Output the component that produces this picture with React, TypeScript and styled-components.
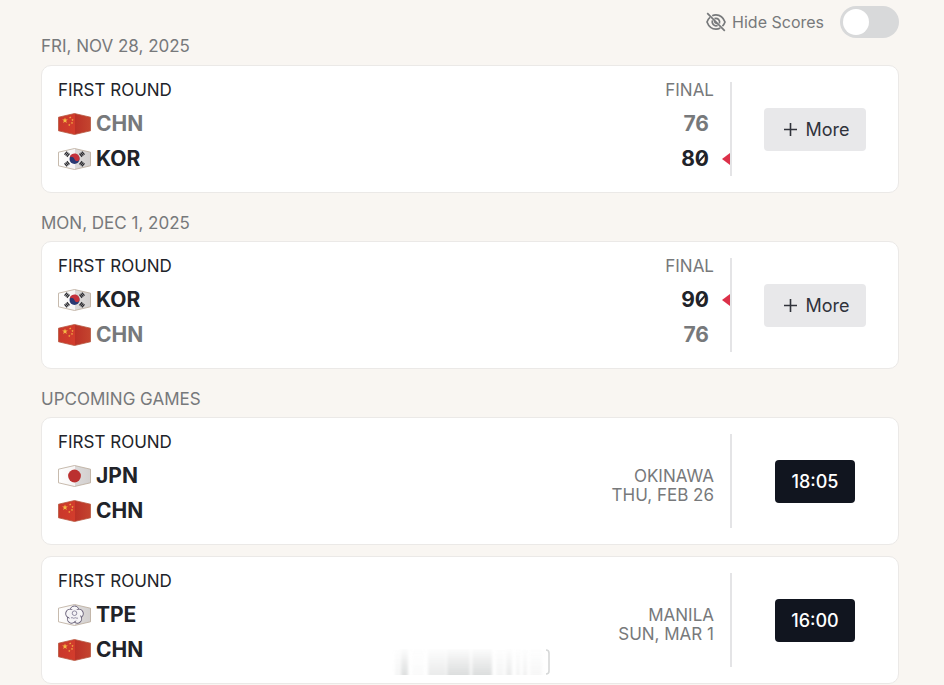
import React, { useState } from "react";
import styled, { createGlobalStyle } from "styled-components";

const GlobalStyle = createGlobalStyle`
  *, *::before, *::after { box-sizing: border-box; }
  body {
    margin: 0;
    background: #f9f6f2;
    color: #212329;
    font-family: Inter, "Liberation Sans", sans-serif;
    font-size: 17px;
    line-height: 16px;
    overflow-x: hidden;
  }
`;

const Page = styled.main`
  padding: 6px 45px 0 41px;
`;

const Toolbar = styled.header`
  display: flex;
  justify-content: flex-end;
`;

const HideScores = styled.label`
  display: flex;
  align-items: center;
  color: #77797b;
  font-size: 16px;
  cursor: pointer;
`;

const HideLabel = styled.span`
  margin: 0 16px 0 6px;
`;

const Toggle = styled.input`
  appearance: none;
  display: flex;
  align-items: center;
  width: 59px;
  height: 32px;
  margin: 0;
  padding: 0 3px;
  border-radius: 16px;
  background: #d8d9da;
  cursor: pointer;

  &::before {
    content: "";
    width: 26px;
    height: 26px;
    border-radius: 50%;
    background: #fff;
  }

  &:checked {
    justify-content: flex-end;
    background: #11151f;
  }
`;

const DateHeading = styled.h2`
  margin: 0 0 11px;
  color: #77797b;
  font-size: 17px;
  font-weight: 400;
  text-transform: uppercase;
`;

const Section = styled.section`
  & + & {
    margin-top: 22px;
  }
  & + & > ${DateHeading} {
    margin-bottom: 10px;
  }
`;

const GameList = styled.div`
  display: flex;
  flex-direction: column;
  gap: 11px;
`;

const Card = styled.article`
  display: flex;
  padding: 16px 0;
  border: 1px solid #ebe9e7;
  border-radius: 10px;
  background: #fff;
`;

const Details = styled.div`
  display: flex;
  flex: 1;
  min-width: 0;
  padding-left: 16px;
  border-right: 2px solid #e4e4e6;
`;

const Matchup = styled.div`
  flex: 1;
`;

const RoundName = styled.h3`
  margin: 0 0 8px;
  color: #212329;
  font-size: 17px;
  font-weight: 400;
`;

const Team = styled.div<{ $muted: boolean }>`
  display: flex;
  align-items: center;
  gap: 5px;
  height: 35px;
  color: ${(p) => (p.$muted ? "#77797b" : "#212329")};
  font-size: 21px;
  font-weight: 700;
`;

const Results = styled.div`
  display: flex;
  flex-direction: column;
`;

const Status = styled.div`
  margin-bottom: 8px;
  padding-right: 16px;
  color: #77797b;
  text-align: right;
`;

const Score = styled.div<{ $muted: boolean }>`
  display: flex;
  align-items: center;
  justify-content: flex-end;
  height: 35px;
  color: ${(p) => (p.$muted ? "#77797b" : "#212329")};
  font-size: 21px;
  font-weight: 700;
`;

const Digit = styled.span<{ $slashed: boolean }>`
  position: relative;

  &::after {
    content: "";
    display: ${(p) => (p.$slashed ? "block" : "none")};
    position: absolute;
    top: 50%;
    left: 50%;
    width: 11px;
    height: 2px;
    background: currentColor;
    transform: translate(-50%, -50%) rotate(-48deg);
  }
`;

const WinnerMark = styled.span<{ $visible: boolean }>`
  margin-left: 13px;
  border-style: solid;
  border-width: 6px 8px 6px 0;
  border-color: transparent ${(p) => (p.$visible ? "#dc3049" : "transparent")} transparent transparent;
`;

const Venue = styled.div`
  align-self: center;
  padding: 10px 16px 0 0;
  color: #77797b;
  line-height: 19px;
  text-align: right;
`;

const Action = styled.div`
  display: flex;
  align-items: center;
  justify-content: center;
  width: 166px;
`;

const ActionButton = styled.button<{ $dark?: boolean }>`
  display: flex;
  align-items: center;
  gap: 8px;
  height: 43px;
  padding: ${(p) => (p.$dark ? "0 16px" : "0 16px 0 20px")};
  border: 0;
  border-radius: 4px;
  background: ${(p) => (p.$dark ? "#11151f" : "#e8e8ea")};
  color: ${(p) => (p.$dark ? "#fff" : "#30333b")};
  font-family: inherit;
  font-size: 18px;
  font-weight: ${(p) => (p.$dark ? 500 : 400)};
  cursor: pointer;
`;

const Smudge = styled.svg`
  position: fixed;
  bottom: 8px;
  left: 50%;
  transform: translateX(-50%);
  pointer-events: none;
`;

type Code = "CHN" | "KOR" | "JPN" | "TPE";
const HEX = "M.5 4.2 16.5.5 32.5 4.2V17.8L16.5 21.5.5 17.8Z";

const star = (cx: number, cy: number, r: number) =>
  Array.from({ length: 10 }, (_, i) => {
    const a = (Math.PI / 5) * i - Math.PI / 2;
    const d = i % 2 ? r * 0.4 : r;
    return `${cx + d * Math.cos(a)},${cy + d * Math.sin(a)}`;
  }).join(" ");

function Trigram({ x, y, angle }: { x: number; y: number; angle: number }) {
  return (
    <g transform={`translate(${x} ${y}) rotate(${angle})`} stroke="#26262b" strokeWidth="1.2">
      <path d="M-2-1.6H2M-2 0H2M-2 1.6H2" />
    </g>
  );
}

function Flag({ code }: { code: Code }) {
  const id = React.useId();
  const red = code === "CHN";
  return (
    <svg width="33" height="22" viewBox="0 0 33 22" role="img" aria-label={code} fill="none">
      <defs>
        <linearGradient id={id} x1="0" y1="0" x2="1" y2="0">
          <stop offset="0" stopColor={red ? "#c9382b" : "#ffffff"} />
          <stop offset=".5" stopColor={red ? "#d23c2c" : "#f6f4f4"} />
          <stop offset=".53" stopColor={red ? "#bb3127" : "#dcdada"} />
          <stop offset="1" stopColor={red ? "#c4452f" : "#d3d0cf"} />
        </linearGradient>
      </defs>
      <path d={HEX} fill={`url(#${id})`} stroke={red ? "#b6573f" : "#b9aa99"} strokeWidth=".8" />
      {code === "CHN" && (
        <g fill="#f5ba45">
          <polygon points={star(7, 7.5, 3)} />
          <polygon points={star(12.2, 4.5, 1.2)} />
          <polygon points={star(14.5, 7, 1.2)} />
          <polygon points={star(14, 10, 1.2)} />
          <polygon points={star(11.3, 12, 1.2)} />
        </g>
      )}
      {code === "JPN" && <circle cx="16.5" cy="11" r="6.4" fill="#bb302f" />}
      {code === "KOR" && (
        <>
          <circle cx="16.5" cy="11" r="5" fill="#293873" />
          <path d="M11.7 9.5A5 5 0 0 1 21.5 11.5C20 14 17.4 13.4 16.5 11.2S12.8 8.2 11.7 9.5Z" fill="#c5323c" />
          <Trigram x={9} y={6.2} angle={-50} />
          <Trigram x={24} y={6.2} angle={50} />
          <Trigram x={9} y={15.8} angle={50} />
          <Trigram x={24} y={15.8} angle={-50} />
        </>
      )}
      {code === "TPE" && (
        <>
          <g fill="#f7f6f8" stroke="#686078" strokeWidth="1">
            {[0, 72, 144, 216, 288].map((a) => (
              <circle key={a} cx="16.5" cy="6.4" r="4.4" transform={`rotate(${a} 16.5 11)`} />
            ))}
          </g>
          <circle cx="16.5" cy="11" r="6" fill="#f4f3f5" />
          <circle cx="16.5" cy="9.2" r="2.3" stroke="#77718b" strokeWidth=".8" />
          <path d="M13 14c1.4-1.3 2.3 1 3.5 0s2.2 1 3.5 0" stroke="#77718b" strokeWidth=".8" />
        </>
      )}
    </svg>
  );
}

function HiddenEye() {
  return (
    <svg width="20" height="20" viewBox="0 0 20 20" fill="none" stroke="#77797b" strokeWidth="1.7" aria-hidden="true">
      <path d="M1.2 1.2 18.8 18.8" />
      <path d="M6.2 3.8C7.4 3.2 8.7 2.9 10 2.9c4.2 0 7.3 2.6 9 7.1-.6 1.7-1.5 3.1-2.6 4.2" />
      <path d="M4 5.3C2.7 6.4 1.7 8 1 10c1.7 4.5 4.8 7.1 9 7.1 1.6 0 3-.4 4.3-1.1" />
      <path d="M8.5 6.6a3.8 3.8 0 0 1 4.9 4.9M6.6 8.4a3.8 3.8 0 0 0 5 5" />
      <path d="M9 9.1a1.4 1.4 0 0 0 1.9 1.9" />
    </svg>
  );
}

function Plus() {
  return (
    <svg width="13" height="13" viewBox="0 0 13 13" stroke="#30333b" strokeWidth="1.6" aria-hidden="true">
      <path d="M6.5 0V13M0 6.5H13" />
    </svg>
  );
}

type Side = { code: Code; score?: number };
type Game = { teams: [Side, Side]; venue?: string; day?: string; time?: string };

function ScoreValue({ value }: { value?: number }) {
  return (
    <span>
      {String(value).split("").map((d, i) => (
        <Digit key={i} $slashed={d === "0"}>{d}</Digit>
      ))}
    </span>
  );
}

function GameCard({ game, hidden }: { game: Game; hidden: boolean }) {
  const best = Math.max(...game.teams.map((t) => t.score ?? 0));
  const isFinal = game.time === undefined;
  return (
    <Card>
      <Details>
        <Matchup>
          <RoundName>FIRST ROUND</RoundName>
          {game.teams.map((t) => (
            <Team key={t.code} $muted={isFinal && t.score !== best}>
              <Flag code={t.code} />
              {t.code}
            </Team>
          ))}
        </Matchup>
        {isFinal ? (
          <Results>
            <Status>FINAL</Status>
            {game.teams.map((t) => (
              <Score key={t.code} $muted={t.score !== best}>
                {hidden ? "–" : <ScoreValue value={t.score} />}
                <WinnerMark $visible={!hidden && t.score === best} />
              </Score>
            ))}
          </Results>
        ) : (
          <Venue>
            {game.venue}
            <br />
            {game.day}
          </Venue>
        )}
      </Details>
      <Action>
        {isFinal ? (
          <ActionButton type="button">
            <Plus />
            More
          </ActionButton>
        ) : (
          <ActionButton type="button" $dark>
            {game.time}
          </ActionButton>
        )}
      </Action>
    </Card>
  );
}

const schedule: { title: string; games: Game[] }[] = [
  { title: "Fri, Nov 28, 2025", games: [{ teams: [{ code: "CHN", score: 76 }, { code: "KOR", score: 80 }] }] },
  { title: "Mon, Dec 1, 2025", games: [{ teams: [{ code: "KOR", score: 90 }, { code: "CHN", score: 76 }] }] },
  {
    title: "Upcoming games",
    games: [
      { teams: [{ code: "JPN" }, { code: "CHN" }], venue: "OKINAWA", day: "THU, FEB 26", time: "18:05" },
      { teams: [{ code: "TPE" }, { code: "CHN" }], venue: "MANILA", day: "SUN, MAR 1", time: "16:00" },
    ],
  },
];

const bars = [
  { x: 3, w: 5, o: 0.25 },
  { x: 9, w: 7, o: 0.8 },
  { x: 20, w: 12, o: 0.12 },
  { x: 36, w: 18, o: 0.5 },
  { x: 55, w: 23, o: 0.85 },
  { x: 80, w: 20, o: 0.85 },
  { x: 104, w: 8, o: 0.25 },
  { x: 114, w: 6, o: 0.5 },
  { x: 124, w: 4, o: 0.3 },
  { x: 131, w: 4, o: 0.35 },
  { x: 138, w: 12, o: 0.2 },
];

function BottomShade() {
  return (
    <Smudge width="160" height="30" viewBox="0 0 160 30" aria-hidden="true">
      <defs>
        <linearGradient id="shade" x1="0" y1="0" x2="0" y2="1">
          <stop offset="0" stopColor="#d5d7d7" stopOpacity="0.1" />
          <stop offset="1" stopColor="#d5d7d7" />
        </linearGradient>
        <filter id="soften" x="-10%" y="-10%" width="120%" height="120%">
          <feGaussianBlur stdDeviation="1.5 0.3" />
        </filter>
      </defs>
      <g filter="url(#soften)">
        {bars.map((b) => (
          <rect key={b.x} x={b.x} y="2" width={b.w} height="26" fill="url(#shade)" opacity={b.o} />
        ))}
      </g>
      <path d="M154 3q3 0 3 3v18q0 3-3 3" fill="none" stroke="#d6d8d8" strokeWidth="1.6" />
    </Smudge>
  );
}

export default function App() {
  const [hidden, setHidden] = useState(false);
  return (
    <>
      <GlobalStyle />
      <Page>
        <Toolbar>
          <HideScores>
            <HiddenEye />
            <HideLabel>Hide Scores</HideLabel>
            <Toggle type="checkbox" role="switch" checked={hidden} onChange={(e) => setHidden(e.target.checked)} />
          </HideScores>
        </Toolbar>
        {schedule.map((s) => (
          <Section key={s.title}>
            <DateHeading>{s.title}</DateHeading>
            <GameList>
              {s.games.map((g, i) => (
                <GameCard key={i} game={g} hidden={hidden} />
              ))}
            </GameList>
          </Section>
        ))}
      </Page>
      <BottomShade />
    </>
  );
}
